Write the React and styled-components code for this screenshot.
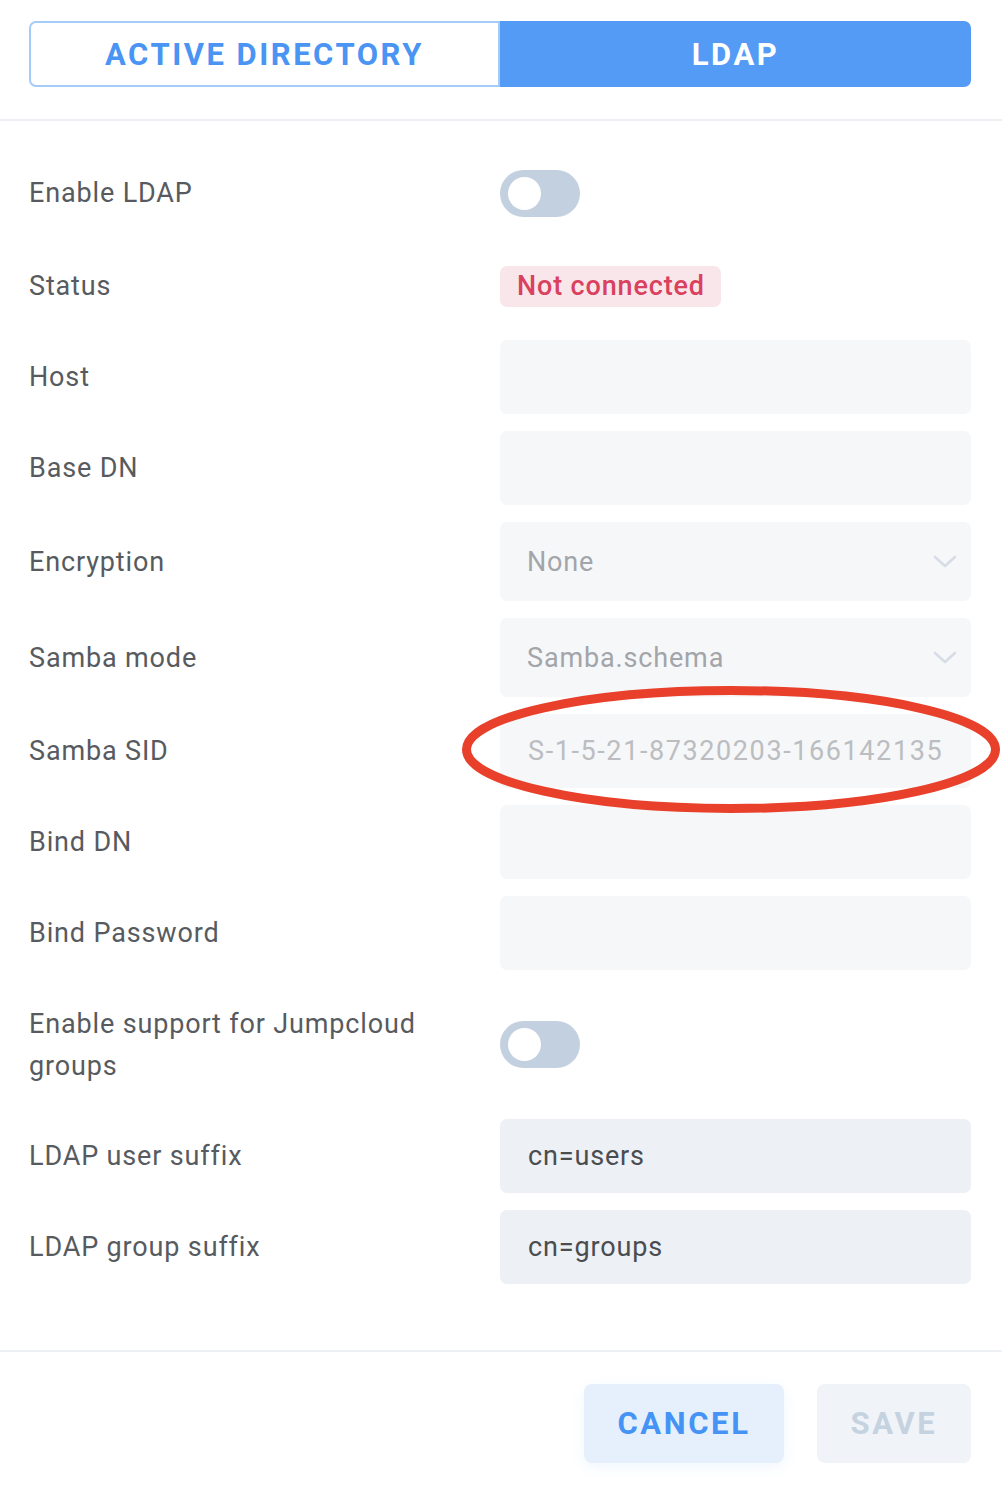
import React from 'react'
import styled, { createGlobalStyle } from 'styled-components'

const GlobalStyle = createGlobalStyle`
  body {
    margin: 0;
    background: #ffffff;
    font-family: Roboto, "Liberation Sans", sans-serif;
  }
`

const Page = styled.div`
  position: relative;
  width: 1002px;
  min-height: 1492px;
  background: #ffffff;
`

const Header = styled.div`
  padding: 21px 31px 32px 29px;
  border-bottom: 2px solid #edf1f5;
`

const Tabs = styled.div`
  display: grid;
  grid-template-columns: 1fr 1fr;
  height: 66px;
`

const Tab = styled.button`
  display: flex;
  align-items: center;
  justify-content: center;
  font-family: Roboto, sans-serif;
  font-size: 31px;
  font-weight: 700;
  letter-spacing: 2.5px;
  text-transform: uppercase;
  cursor: pointer;
  border: 2px solid ${p => (p.active ? '#549bf6' : '#a5cbf8')};
  background: ${p => (p.active ? '#549bf6' : '#ffffff')};
  color: ${p => (p.active ? '#ffffff' : '#4a94f3')};
  border-radius: ${p => (p.active ? '0 7px 7px 0' : '7px 0 0 7px')};
`

const Form = styled.div`
  display: flex;
  flex-direction: column;
  gap: 17px;
  padding: 33px 31px 66px 29px;
`

const Row = styled.div`
  display: grid;
  grid-template-columns: 471px 1fr;
  align-items: center;
  min-height: ${p => p.h || 74}px;
`

const Label = styled.div`
  font-size: 27px;
  line-height: 42px;
  letter-spacing: 0.85px;
  color: #575b60;
  padding-right: 40px;
`

const Switch = styled.div`
  position: relative;
  width: 80px;
  height: 47px;
  border-radius: 24px;
  background: #c3d0e0;
`

const Knob = styled.span`
  position: absolute;
  left: 8px;
  top: 7px;
  width: 33px;
  height: 33px;
  border-radius: 50%;
  background: #ffffff;
`

const Badge = styled.span`
  justify-self: start;
  display: inline-flex;
  align-items: center;
  height: 41px;
  padding: 0 16px 0 17px;
  border-radius: 7px;
  background: #f9e6ea;
  color: #d9415e;
  font-size: 27px;
  font-weight: 500;
  letter-spacing: 0.85px;
`

const Input = styled.input`
  box-sizing: border-box;
  width: 100%;
  height: ${p => p.h || 74}px;
  padding: 0 28px 0 28px;
  border: none;
  outline: none;
  border-radius: 7px;
  font-family: Roboto, sans-serif;
  font-size: 27px;
  letter-spacing: ${p => (p.wide ? 1.6 : 0.85)}px;
  background: ${p => (p.filled ? '#edf0f5' : '#f6f7f9')};
  color: ${p => p.tone || '#4a4d50'};
  -webkit-text-fill-color: ${p => p.tone || '#4a4d50'};
`

const Select = styled.div`
  box-sizing: border-box;
  display: flex;
  align-items: center;
  justify-content: space-between;
  height: 79px;
  padding: 0 14px 0 27px;
  border-radius: 7px;
  background: #f6f7f9;
  font-size: 27px;
  letter-spacing: 0.85px;
  color: #a2a5a9;
`

const Footer = styled.div`
  display: flex;
  justify-content: flex-end;
  gap: 33px;
  padding: 32px 31px 29px;
  border-top: 2px solid #edf1f5;
`

const Button = styled.button`
  height: 79px;
  width: ${p => p.w}px;
  border: none;
  border-radius: 8px;
  font-family: Roboto, sans-serif;
  font-size: 31px;
  font-weight: 700;
  letter-spacing: 2.6px;
  text-transform: uppercase;
  cursor: pointer;
  background: ${p => (p.primary ? '#e6f0fc' : '#f0f3f7')};
  color: ${p => (p.primary ? '#4593f5' : '#c5d2e0')};
  box-shadow: ${p => (p.primary ? '0 4px 14px rgba(69, 147, 245, 0.08)' : 'none')};
`

const Annotation = styled.svg`
  position: absolute;
  left: 455px;
  top: 680px;
  pointer-events: none;
`

const Chevron = () => (
  <svg width="24" height="14" viewBox="0 0 24 14">
    <polyline points="2,2 12,11 22,2" fill="none" stroke="#d6dde6" strokeWidth="2.6" strokeLinecap="round" strokeLinejoin="round" />
  </svg>
)

const Toggle = () => (
  <Switch>
    <Knob />
  </Switch>
)

const App = () => (
  <Page>
    <GlobalStyle />
    <Header>
      <Tabs>
        <Tab>Active Directory</Tab>
        <Tab active>LDAP</Tab>
      </Tabs>
    </Header>

    <Form>
      <Row h={78}>
        <Label>Enable LDAP</Label>
        <Toggle />
      </Row>
      <Row>
        <Label>Status</Label>
        <Badge>Not connected</Badge>
      </Row>
      <Row>
        <Label>Host</Label>
        <Input readOnly value="" />
      </Row>
      <Row>
        <Label>Base DN</Label>
        <Input readOnly value="" />
      </Row>
      <Row h={79}>
        <Label>Encryption</Label>
        <Select>
          None
          <Chevron />
        </Select>
      </Row>
      <Row h={79}>
        <Label>Samba mode</Label>
        <Select>
          Samba.schema
          <Chevron />
        </Select>
      </Row>
      <Row>
        <Label>Samba SID</Label>
        <Input readOnly wide tone="#bbbdc0" value="S-1-5-21-87320203-1661421358-3297615245" />
      </Row>
      <Row>
        <Label>Bind DN</Label>
        <Input readOnly value="" />
      </Row>
      <Row>
        <Label>Bind Password</Label>
        <Input readOnly type="password" value="" />
      </Row>
      <Row h={115}>
        <Label>Enable support for Jumpcloud groups</Label>
        <Toggle />
      </Row>
      <Row>
        <Label>LDAP user suffix</Label>
        <Input readOnly filled value="cn=users" />
      </Row>
      <Row>
        <Label>LDAP group suffix</Label>
        <Input readOnly filled value="cn=groups" />
      </Row>
    </Form>

    <Footer>
      <Button primary w={200}>Cancel</Button>
      <Button w={154}>Save</Button>
    </Footer>

    <Annotation width="547" height="140" viewBox="0 0 547 140">
      <ellipse cx="276" cy="69.5" rx="264.5" ry="59" fill="none" stroke="#e8402a" strokeWidth="9" />
    </Annotation>
  </Page>
)

export default App
